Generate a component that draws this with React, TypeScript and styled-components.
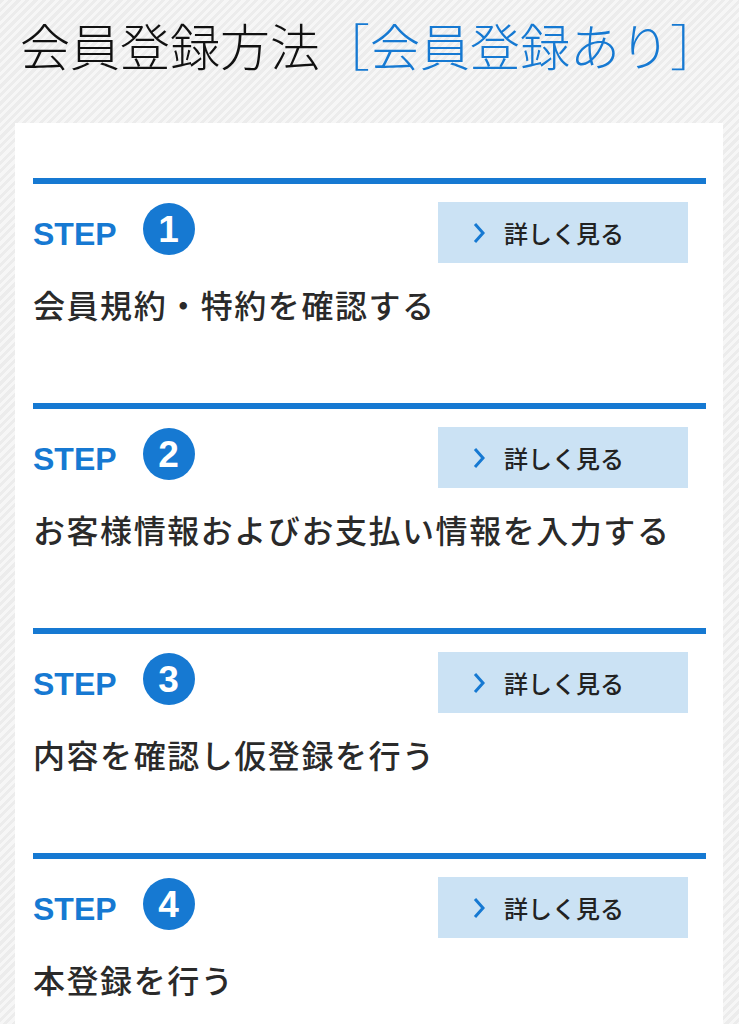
import React from 'react';
import styled, { createGlobalStyle } from 'styled-components';

const GlobalStyle = createGlobalStyle`
  html, body {
    margin: 0;
    padding: 0;
  }
  body {
    background-color: #ececec;
    background-image: repeating-linear-gradient(
      135deg,
      #ececec 0px,
      #ececec 3px,
      #f6f6f6 3px,
      #f6f6f6 6px
    );
    font-family: "Noto Sans CJK JP", "Noto Sans", sans-serif;
    overflow: hidden;
  }
`;

const BLUE = '#1679d2';

const Page = styled.div`
  width: 739px;
  min-height: 1024px;
  box-sizing: border-box;
  padding: 8px 16px 0 15px;
`;

const Title = styled.h1`
  margin: 0 0 43px 5px;
  font-size: 50px;
  line-height: 72px;
  font-weight: 300;
  color: #111;
  white-space: nowrap;
`;

const TitleAccent = styled.span`
  color: ${BLUE};
`;

const Card = styled.div`
  background: #fff;
  padding: 55px 17px 40px 18px;
  display: flex;
  flex-direction: column;
  gap: 74px;
`;

const Step = styled.section`
  border-top: 6px solid ${BLUE};
  padding-top: 18px;
`;

const StepHead = styled.div`
  display: flex;
  align-items: center;
  height: 61px;
`;

const StepLabel = styled.span`
  font-family: "Liberation Sans", "Noto Sans", sans-serif;
  font-weight: 700;
  font-size: 32px;
  color: ${BLUE};
  margin-top: 4px;
`;

const StepNumber = styled.span`
  width: 52px;
  height: 52px;
  border-radius: 50%;
  background: ${BLUE};
  color: #fff;
  display: flex;
  align-items: center;
  justify-content: center;
  margin-left: 26px;
  margin-bottom: 7px;
  font-family: "Liberation Sans", "Noto Sans", sans-serif;
  font-weight: 700;
  font-size: 37px;
  line-height: 1;
`;

const MoreButton = styled.button`
  margin-left: auto;
  margin-right: 18px;
  width: 250px;
  height: 61px;
  border: none;
  background: #cbe2f4;
  display: flex;
  align-items: center;
  padding: 0 0 0 35px;
  gap: 19px;
  font-family: "Noto Sans CJK JP", sans-serif;
  font-size: 24px;
  font-weight: 500;
  color: #222;
  cursor: pointer;
`;

const StepText = styled.p`
  margin: 16px 0 0;
  font-size: 32px;
  line-height: 50px;
  letter-spacing: 1.55px;
  font-weight: 500;
  color: #2a2a2a;
  white-space: nowrap;
`;

const Chevron = () => (
  <svg width="12" height="22" viewBox="0 0 12 22" fill="none">
    <polyline points="2,2 10,11 2,20" stroke={BLUE} strokeWidth="3" strokeLinejoin="miter" />
  </svg>
);

const steps = [
  '会員規約・特約を確認する',
  'お客様情報およびお支払い情報を入力する',
  '内容を確認し仮登録を行う',
  '本登録を行う',
];

export default function App() {
  return (
    <>
      <GlobalStyle />
      <Page>
        <Title>
          会員登録方法<TitleAccent>［会員登録あり］</TitleAccent>
        </Title>
        <Card>
          {steps.map((text, i) => (
            <Step key={i}>
              <StepHead>
                <StepLabel>STEP</StepLabel>
                <StepNumber>{i + 1}</StepNumber>
                <MoreButton type="button">
                  <Chevron />
                  詳しく見る
                </MoreButton>
              </StepHead>
              <StepText>{text}</StepText>
            </Step>
          ))}
        </Card>
      </Page>
    </>
  );
}
